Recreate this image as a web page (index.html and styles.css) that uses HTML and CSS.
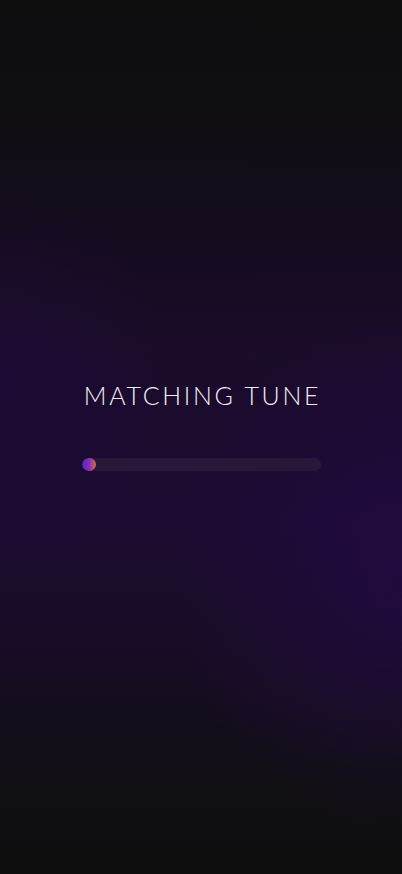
FILE: index.html
```html
<!DOCTYPE html>
<html lang="en">
<head>
<meta charset="utf-8">
<meta name="viewport" content="width=device-width, initial-scale=1">
<title>Matching Tune</title>
<link rel="stylesheet" href="styles.css">
</head>
<body>
<main class="screen">
  <div class="loader">
    <h1 class="title">MATCHING TUNE</h1>
    <div class="track"><div class="fill" style="width:14px"></div></div>
  </div>
</main>
</body>
</html>
```
FILE: styles.css
```css
html, body {
  margin: 0;
  padding: 0;
  height: 100%;
}
body {
  background: #0e0e0f;
  font-family: "Lato", "Inter", sans-serif;
}
.screen {
  height: 874px;
  display: flex;
  align-items: center;
  justify-content: center;
  background:
    radial-gradient(ellipse 220px 260px at 400px 580px, rgba(40, 10, 80, 0.5), rgba(40, 10, 80, 0) 100%),
    radial-gradient(ellipse 160px 200px at 0px 380px, rgba(35, 10, 70, 0.35), rgba(35, 10, 70, 0) 100%),
    linear-gradient(180deg, #0e0e0f 0%, #0f0e11 12%, #150c1f 28%, #1a0b2b 42%, #1b0b30 60%, #170c24 76%, #100f12 90%, #0e0e0f 100%);
}
.loader {
  width: 239px;
  display: flex;
  flex-direction: column;
  align-items: center;
  margin-top: -23px;
}
.title {
  margin: 0 -3px 0 0;
  color: #f1eef5;
  font-family: "Lato", sans-serif;
  font-weight: 300;
  font-size: 25px;
  line-height: 30px;
  letter-spacing: 2.7px;
  white-space: nowrap;
}
.track {
  margin-top: 48px;
  width: 239px;
  height: 13px;
  border-radius: 7px;
  background: #271839;
  overflow: hidden;
}
.fill {
  height: 100%;
  border-radius: 7px;
  background: linear-gradient(90deg, #5a1fd8 0%, #7a2cc0 45%, #e0683a 100%);
}
```
